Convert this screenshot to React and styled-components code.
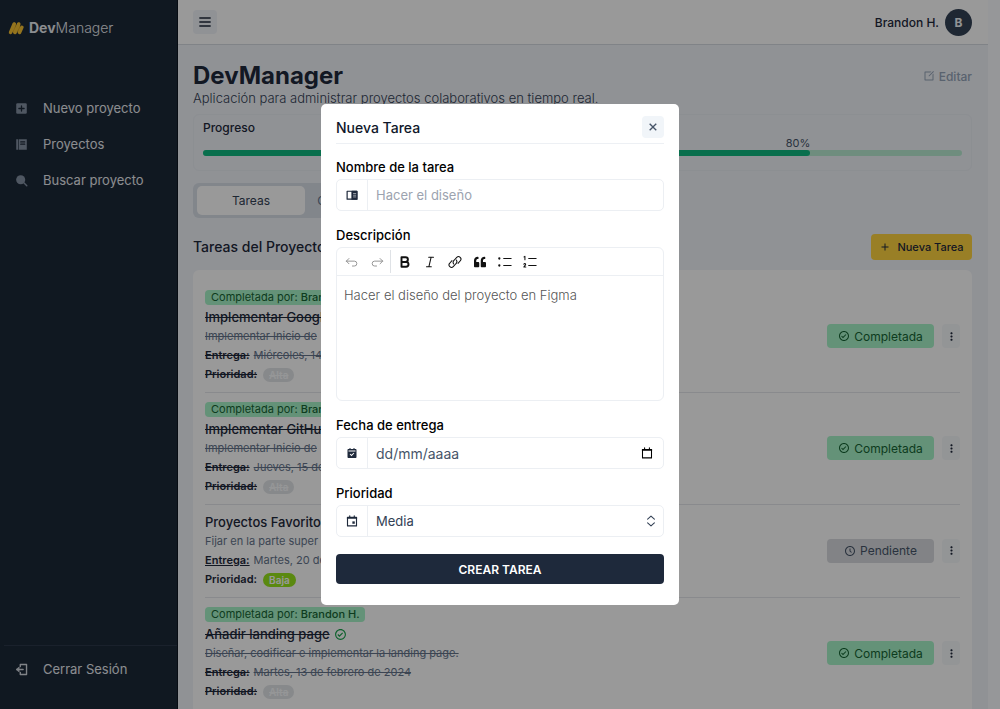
import React from "react";
import styled, { createGlobalStyle, css } from "styled-components";
import { FaQuoteLeft } from "react-icons/fa";
import { BiSolidCalendarCheck, BiDotsVerticalRounded, BiCheckCircle, BiTimeFive, BiPlus, BiX } from "react-icons/bi";
import { RiEditBoxLine } from "react-icons/ri";

const Global = createGlobalStyle`
  *, *::before, *::after { box-sizing: border-box; }
  body { margin: 0; font-family: Inter, "Open Sans", sans-serif; font-size: 12px; color: #1e293b; background: #fbfcff; }
  button, input, textarea, select { font: inherit; color: inherit; margin: 0; }
  h1, h2, h3, p, ul { margin: 0; padding: 0; }
  ul { list-style: none; }
  svg { display: block; flex: none; }
`;

const Shell = styled.div`
  display: grid;
  grid-template-columns: 178px minmax(0, 1fr);
  height: 100vh;
  padding-right: 12px;
  overflow: hidden;
`;

const Sidebar = styled.aside`
  display: flex;
  flex-direction: column;
  background: #1c2838;
  color: #e8ebf0;
  border-right: 1px solid #0c1420;
`;

const Brand = styled.a`
  display: flex;
  align-items: center;
  gap: 5px;
  padding: 18px 8px 0;
  line-height: 20px;
  font-size: 14px;
  font-weight: 300;
  color: inherit;
  text-decoration: none;
  b { font-weight: 700; }
`;

const Nav = styled.nav`
  display: flex;
  flex-direction: column;
  gap: 16px;
  padding-top: 60px;
  flex: 1;
`;

const NavLink = styled.a`
  display: flex;
  align-items: center;
  gap: 15px;
  padding-left: 15px;
  line-height: 20px;
  font-size: 13px;
  color: inherit;
  text-decoration: none;
  svg { color: ${(p) => (p.$bright ? "#d5dae2" : "#8491a3")}; }
`;

const SideFoot = styled.div`
  margin-left: 4px;
  padding: 13px 0 30px;
  border-top: 1px solid #2c384a;
  a { padding-left: 11px; }
`;

const Page = styled.div`
  display: flex;
  flex-direction: column;
  min-width: 0;
  background: #f0f3f9;
`;

const TopBar = styled.header`
  display: flex;
  justify-content: space-between;
  align-items: center;
  flex: none;
  height: 45px;
  padding: 0 16px 0 15px;
  background: #fff;
  border-bottom: 1px solid #d6dae2;
`;

const MenuButton = styled.button`
  display: grid;
  place-items: center;
  width: 24px;
  height: 24px;
  padding: 0;
  border: 0;
  border-radius: 4px;
  background: #f0f3f9;
`;

const User = styled.div`
  display: flex;
  align-items: center;
  gap: 6px;
  font-size: 12px;
  font-weight: 500;
`;

const Avatar = styled.span`
  display: grid;
  place-items: center;
  width: 27px;
  height: 27px;
  border-radius: 50%;
  background: #334155;
  color: #f1f5f9;
  font-weight: 700;
`;

const Main = styled.main`
  display: flex;
  flex-direction: column;
  flex: 1;
  min-height: 0;
  padding: 16px 16px 0 15px;
`;

const Between = styled.div`
  display: flex;
  justify-content: space-between;
  align-items: center;
`;

const Title = styled.h1`
  font-size: 24px;
  line-height: 30px;
  font-weight: 700;
`;

const EditLink = styled.a`
  display: flex;
  align-items: center;
  gap: 4px;
  font-size: 12px;
  font-weight: 500;
  color: #94a3b8;
  text-decoration: none;
`;

const Lead = styled.p`
  font-size: 13px;
  line-height: 14px;
  font-weight: 300;
  color: #334155;
`;

const ProgressCard = styled.section`
  margin-top: 9px;
  height: 57px;
  padding: 4px 9px;
  border: 1px solid #eaeef4;
  border-radius: 6px;
`;

const ProgressTitle = styled.h2`
  font-size: 12px;
  line-height: 18px;
  font-weight: 500;
`;

const Percent = styled.p`
  width: 80%;
  line-height: 12px;
  text-align: right;
  font-size: 11px;
  color: #475569;
`;

const Track = styled.div`
  height: 6px;
  margin-top: 1px;
  border-radius: 3px;
  background: #b9ecd3;
`;

const Fill = styled.div`
  width: 80%;
  height: 100%;
  border-radius: 3px;
  background: #10b981;
`;

const Tabs = styled.div`
  display: flex;
  align-self: flex-start;
  margin-top: 12px;
  padding: 3px 4px;
  border-radius: 6px;
  background: #d9dfe8;
`;

const Tab = styled.button`
  width: 108px;
  height: 29px;
  padding: 0;
  border: 0;
  border-radius: 5px;
  background: ${(p) => (p.$active ? "#fff" : "transparent")};
  font-size: 12px;
  color: ${(p) => (p.$active ? "#334155" : "#64748b")};
`;

const SectionTitle = styled.h2`
  font-size: 14px;
  line-height: 20px;
  font-weight: 500;
`;

const TasksHead = styled(Between)`
  margin-top: 16px;
`;

const AddButton = styled.button`
  display: flex;
  align-items: center;
  justify-content: center;
  gap: 6px;
  width: 101px;
  height: 26px;
  padding: 0;
  border: 0;
  border-radius: 4px;
  background: #ffd440;
  font-size: 11px;
  font-weight: 500;
  white-space: nowrap;
`;

const TaskList = styled.ul`
  flex: 1;
  margin-top: 10px;
  padding: 11px 12px 0;
  background: #fff;
  border-radius: 6px 6px 0 0;
`;

const Task = styled.li`
  display: flex;
  align-items: center;
  justify-content: space-between;
  padding: 7px 0 8px;
  border-bottom: 1px solid #e5e7eb;
  &:last-child { border-bottom: 0; }
`;

const DoneBy = styled.p`
  width: fit-content;
  margin: 2px 0;
  padding: 0 6px;
  border-radius: 4px;
  background: #a7f3c8;
  color: #166534;
  font-size: 11px;
  line-height: 15px;
  b { font-weight: 500; }
`;

const TaskName = styled.h3`
  display: flex;
  align-items: center;
  gap: 4px;
  font-size: 13px;
  line-height: 20px;
  font-weight: 500;
  svg { color: #16a34a; }
  span { text-decoration: ${(p) => (p.$done ? "line-through" : "none")}; }
`;

const Line = styled.p`
  display: flex;
  align-items: center;
  gap: 4px;
  font-size: 11px;
  line-height: 19px;
  color: #64748b;
  span { text-decoration: ${(p) => (p.$done ? "line-through" : "none")}; }
  b {
    font-weight: 600;
    color: #1e293b;
    text-decoration: ${(p) => (p.$done ? "line-through" : p.$under ? "underline" : "none")};
  }
`;

const Level = styled.em`
  margin-left: 2px;
  padding: 0 6px;
  border-radius: 7px;
  font-style: normal;
  font-size: 10px;
  line-height: 14px;
  font-weight: 600;
  ${(p) =>
    p.$done
      ? css`background: #e2e5e8; color: #f8fafc; text-decoration: line-through;`
      : css`background: #96e41c; color: #fff;`}
`;

const Actions = styled.div`
  display: flex;
  gap: 8px;
`;

const Status = styled.button`
  display: flex;
  align-items: center;
  justify-content: center;
  gap: 4px;
  width: 107px;
  height: 24px;
  padding: 0;
  border: 0;
  border-radius: 4px;
  font-size: 12px;
  background: ${(p) => (p.$done ? "#a7f3c8" : "#d9dbdf")};
  color: ${(p) => (p.$done ? "#166534" : "#475569")};
`;

const More = styled.button`
  display: grid;
  place-items: center;
  width: 18px;
  height: 24px;
  padding: 0;
  border: 0;
  border-radius: 4px;
  background: #f6f8fb;
`;

const Overlay = styled.div`
  position: fixed;
  inset: 0;
  display: grid;
  place-items: center;
  background: rgba(0, 0, 0, 0.4);
`;

const Dialog = styled.section`
  width: 358px;
  max-width: 100%;
  padding: 12px 15px 21px;
  border-radius: 5px;
  background: #fff;
`;

const DialogHead = styled(Between)`
  padding-bottom: 5px;
  border-bottom: 1px solid #edf0f4;
`;

const DialogTitle = styled.h2`
  font-size: 14px;
  font-weight: 500;
  color: #0f172a;
`;

const Close = styled.button`
  display: grid;
  place-items: center;
  width: 22px;
  height: 22px;
  padding: 0;
  border: 0;
  border-radius: 4px;
  background: #f1f5f9;
  color: #475569;
`;

const Form = styled.form`
  display: flex;
  flex-direction: column;
  gap: 14px;
  padding-top: 13px;
`;

const Label = styled.label`
  display: block;
  margin-bottom: 2px;
  line-height: 20px;
  font-size: 13px;
  font-weight: 500;
  color: #000;
`;

const Box = styled.div`
  display: flex;
  align-items: center;
  height: 32px;
  border: 1px solid #eceff3;
  border-radius: 5px;
  color: #334155;
  > svg:last-child { margin-right: 6px; }
`;

const Adorn = styled.span`
  display: grid;
  place-items: center;
  width: 31px;
  height: 100%;
  border-right: 1px solid #eceff3;
  color: #1e293b;
`;

const control = css`
  flex: 1;
  min-width: 0;
  height: 100%;
  padding: 0 8px;
  border: 0;
  outline: 0;
  background: transparent;
  font-size: 13px;
`;

const Input = styled.input`
  ${control}
  &::placeholder { color: #9ca3af; opacity: 1; }
`;

const DateInput = styled.input`
  ${control}
  font-size: 14px;
  &::placeholder { color: #475569; opacity: 1; }
`;

const Select = styled.select`
  ${control}
  appearance: none;
`;

const PickerButton = styled.button`
  display: grid;
  place-items: center;
  width: 18px;
  height: 18px;
  margin-right: 7px;
  padding: 0;
  border: 0;
  background: transparent;
  color: #000;
`;

const Editor = styled.div`
  display: flex;
  flex-direction: column;
  height: 154px;
  border: 1px solid #eceff3;
  border-radius: 6px;
`;

const Toolbar = styled.div`
  display: flex;
  align-items: center;
  height: 28px;
  padding: 0 2px;
  border-bottom: 1px solid #eceff3;
`;

const Tool = styled.button`
  display: grid;
  place-items: center;
  width: 25px;
  height: 25px;
  padding: 0;
  border: 0;
  background: transparent;
  color: ${(p) => (p.disabled ? "#888" : "#111")};
`;

const Divider = styled.span`
  width: 1px;
  height: 23px;
  margin: 0 1px;
  background: #dfe2e6;
`;

const TextArea = styled.textarea`
  flex: 1;
  padding: 9px 7px;
  border: 0;
  outline: 0;
  resize: none;
  background: transparent;
  font-size: 13px;
  font-weight: 300;
  line-height: 20px;
  &::placeholder { color: #555; opacity: 1; }
`;

const Submit = styled.button`
  height: 30px;
  margin-top: 3px;
  padding: 0;
  border: 0;
  border-radius: 4px;
  background: #1e293b;
  color: #fff;
  font-size: 12px;
  font-weight: 600;
  text-transform: uppercase;
`;

const Svg = ({ size = 14, children, ...rest }) => (
  <svg width={size} height={size} viewBox="0 0 16 16" fill="none" stroke="currentColor" strokeLinecap="round" strokeLinejoin="round" aria-hidden="true" {...rest}>
    {children}
  </svg>
);

const Logo = () => (
  <svg width="16" height="14" viewBox="0 0 16 14" fill="none" strokeLinecap="round" aria-hidden="true">
    <path d="M6.3 3.2v7.8M10.8 3.2v7.5" stroke="#dba01c" strokeWidth="2.8" />
    <path d="M2.6 11.4 6.2 3M7 11.4l3.7-8.4" stroke="#f7c233" strokeWidth="3.6" />
    <path d="m11.6 11.5 2.3-5.2" stroke="#f7c233" strokeWidth="3.4" />
  </svg>
);

const PlusSquare = () => (
  <Svg size={13} stroke="none">
    <rect x="1.5" y="1.5" width="13" height="13" rx="1.5" fill="currentColor" />
    <path d="M8 4.8v6.4M4.8 8h6.4" stroke="#1c2838" strokeWidth="1.6" />
  </Svg>
);

const Book = () => (
  <Svg size={13} stroke="none">
    <path d="M1.5 1.500h2.200v13H1.500zM4.500 1.500h10v13h-10z" fill="currentColor" />
    <path d="M7 4.800h5M7 7.600h5" stroke="#1c2838" strokeWidth="1.4" />
  </Svg>
);

const Search = () => (
  <Svg size={13}>
    <circle cx="7" cy="7" r="5.6" fill="currentColor" stroke="none" />
    <path d="m10.5 10.5 4 4" strokeWidth="1.8" />
  </Svg>
);

const Exit = () => (
  <Svg size={13} strokeWidth="1.7">
    <path d="M6.5 4.5V1.8h7.7v12.4H6.5v-2.7M10 8H2.5" />
    <path d="M4.8 5.2 1.3 8l3.5 2.8z" fill="currentColor" strokeWidth="0.8" />
  </Svg>
);

const Reader = () => (
  <Svg size={12} strokeWidth="1.6">
    <path d="M1.5 3h13v10.500h-13z" />
    <path d="M8 3h6.500v10.500H8z" fill="currentColor" />
    <path d="M10 6h3M10 8.300h3M10 10.600h3" stroke="#fff" strokeWidth="0.7" />
  </Svg>
);

const EventDay = () => (
  <Svg size={12} strokeWidth="1.5">
    <path d="M2 3.200h12v11.300H2zM5 1v2M11 1v2" />
    <path d="M2 4h12" strokeWidth="2" />
    <path d="M8.500 8.500h3.200v3.200H8.500z" fill="currentColor" stroke="none" />
  </Svg>
);

const TASKS = [
  { name: "Implementar Google", text: "Implementar Inicio de", date: "Miércoles, 14", level: "Alta", done: true },
  { name: "Implementar GitHub", text: "Implementar Inicio de", date: "Jueves, 15 de", level: "Alta", done: true },
  { name: "Proyectos Favoritos", text: "Fijar en la parte super", date: "Martes, 20 de", level: "Baja", done: false },
  { name: "Añadir landing page", text: "Diseñar, codificar e implementar la landing page.", date: "Martes, 13 de febrero de 2024", level: "Alta", done: true },
];

const TaskRow = ({ task }) => (
  <Task>
    <div>
      {task.done && <DoneBy>Completada por: <b>Brandon H.</b></DoneBy>}
      <TaskName $done={task.done}>
        <span>{task.name}</span>
        {task.done && <BiCheckCircle size={13} />}
      </TaskName>
      <Line $done={task.done}><span>{task.text}</span></Line>
      <Line $done={task.done} $under={!task.done}><b>Entrega:</b><span>{task.date}</span></Line>
      <Line $done={task.done}>
        <b>Prioridad:</b>
        <Level $done={task.done}>{task.level}</Level>
      </Line>
    </div>
    <Actions>
      <Status type="button" $done={task.done}>
        {task.done ? <BiCheckCircle size={12} /> : <BiTimeFive size={12} />}
        {task.done ? "Completada" : "Pendiente"}
      </Status>
      <More type="button" aria-label="Opciones"><BiDotsVerticalRounded size={13} /></More>
    </Actions>
  </Task>
);

const TaskDialog = () => (
  <Overlay>
    <Dialog role="dialog" aria-modal="true" aria-labelledby="dialog-title">
      <DialogHead>
        <DialogTitle id="dialog-title">Nueva Tarea</DialogTitle>
        <Close type="button" aria-label="Cerrar"><BiX size={16} /></Close>
      </DialogHead>
      <Form>
        <div>
          <Label htmlFor="name">Nombre de la tarea</Label>
          <Box>
            <Adorn><Reader /></Adorn>
            <Input id="name" placeholder="Hacer el diseño" />
          </Box>
        </div>
        <div>
          <Label htmlFor="description">Descripción</Label>
          <Editor>
            <Toolbar>
              <Tool type="button" disabled aria-label="Deshacer">
                <Svg><path d="M4.5 4 1.5 7l3 3M1.5 7h9.200a2.800 2.800 0 0 1 0 5.600H8.500" /></Svg>
              </Tool>
              <Tool type="button" disabled aria-label="Rehacer">
                <Svg><path d="m11.5 4 3 3-3 3M14.5 7H5.300a2.800 2.800 0 0 0 0 5.600h2.200" /></Svg>
              </Tool>
              <Divider />
              <Tool type="button" aria-label="Negrita">
                <Svg strokeWidth="2.2"><path d="M4 2.5h4.600a2.700 2.700 0 0 1 0 5.400H4zM4 7.900h5.200a2.800 2.800 0 0 1 0 5.600H4z" /></Svg>
              </Tool>
              <Tool type="button" aria-label="Cursiva">
                <Svg strokeWidth="1.2"><path d="M6.5 2.5H12M4 13.5h5.500M9.300 2.500l-2.600 11" /></Svg>
              </Tool>
              <Tool type="button" aria-label="Enlace">
                <Svg strokeWidth="1.2"><path d="M6.500 10.300A3.300 3.300 0 0 1 7 6l3-3.200a2.700 2.700 0 0 1 4 3.800L11.500 9.500M9.500 5.700A3.300 3.300 0 0 1 9 10l-3 3.200a2.700 2.700 0 0 1-4-3.800L4.500 6.500" /></Svg>
              </Tool>
              <Tool type="button" aria-label="Cita"><FaQuoteLeft size={12} /></Tool>
              <Tool type="button" aria-label="Lista">
                <Svg strokeWidth="1.2"><path d="M6.5 4H15M6.5 12H15" /><path d="M1.5 4h.01M1.5 12h.01" strokeWidth="2.6" /></Svg>
              </Tool>
              <Tool type="button" aria-label="Lista numerada">
                <Svg strokeWidth="1.2"><path d="M6.5 4H15M6.5 12H15M1.200 2.200l1-.7v4M1 10.600c.3-1.200 2.200-1 2 .2-.1.900-1.300 1.500-2 3h2.200" /></Svg>
              </Tool>
            </Toolbar>
            <TextArea id="description" placeholder="Hacer el diseño del proyecto en Figma" />
          </Editor>
        </div>
        <div>
          <Label htmlFor="due">Fecha de entrega</Label>
          <Box>
            <Adorn><BiSolidCalendarCheck size={12} /></Adorn>
            <DateInput id="due" placeholder="dd/mm/aaaa" />
            <PickerButton type="button" aria-label="Abrir calendario">
              <Svg size={12} strokeWidth="1.4"><path d="M2 3.200h12v11.300H2zM4.800 1v2M11.200 1v2" /><path d="M2 4h12" strokeWidth="2" /></Svg>
            </PickerButton>
          </Box>
        </div>
        <div>
          <Label htmlFor="priority">Prioridad</Label>
          <Box>
            <Adorn><EventDay /></Adorn>
            <Select id="priority" defaultValue="Media">
              <option>Baja</option>
              <option>Media</option>
              <option>Alta</option>
            </Select>
            <Svg size={12} strokeWidth="1.5"><path d="M3.500 5.500 8 1.500l4.500 4M3.500 10.500l4.500 4 4.500-4" /></Svg>
          </Box>
        </div>
        <Submit type="submit">Crear tarea</Submit>
      </Form>
    </Dialog>
  </Overlay>
);

export default function App() {
  return (
    <>
      <Global />
      <Shell>
        <Sidebar>
          <Brand href="#"><Logo /><span><b>Dev</b>Manager</span></Brand>
          <Nav>
            <NavLink href="#"><PlusSquare />Nuevo proyecto</NavLink>
            <NavLink href="#"><Book />Proyectos</NavLink>
            <NavLink href="#"><Search />Buscar proyecto</NavLink>
          </Nav>
          <SideFoot><NavLink href="#" $bright><Exit />Cerrar Sesión</NavLink></SideFoot>
        </Sidebar>
        <Page>
          <TopBar>
            <MenuButton type="button" aria-label="Menú">
              <Svg strokeWidth="1.6" strokeLinecap="butt"><path d="M1.5 3.500h13M1.500 8h13M1.500 12.500h13" /></Svg>
            </MenuButton>
            <User>Brandon H.<Avatar>B</Avatar></User>
          </TopBar>
          <Main>
            <Between>
              <Title>DevManager</Title>
              <EditLink href="#"><RiEditBoxLine size={12} />Editar</EditLink>
            </Between>
            <Lead>Aplicación para administrar proyectos colaborativos en tiempo real.</Lead>
            <ProgressCard>
              <ProgressTitle>Progreso</ProgressTitle>
              <Percent>80%</Percent>
              <Track><Fill /></Track>
            </ProgressCard>
            <Tabs>
              <Tab type="button" $active>Tareas</Tab>
              <Tab type="button">Colaboradores</Tab>
            </Tabs>
            <TasksHead>
              <SectionTitle>Tareas del Proyecto</SectionTitle>
              <AddButton type="button"><BiPlus size={12} />Nueva Tarea</AddButton>
            </TasksHead>
            <TaskList>
              {TASKS.map((task) => <TaskRow key={task.name} task={task} />)}
            </TaskList>
          </Main>
        </Page>
      </Shell>
      <TaskDialog />
    </>
  );
}
